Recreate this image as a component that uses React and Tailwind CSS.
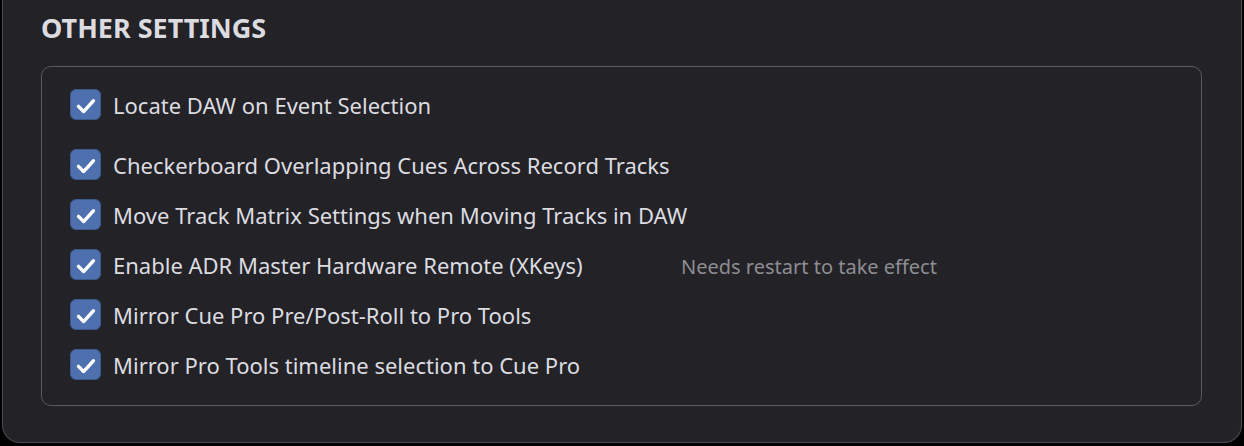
const font = { fontFamily: '"Noto Sans", "Open Sans", sans-serif' };

const settings = [
  { label: "Checkerboard Overlapping Cues Across Record Tracks" },
  { label: "Move Track Matrix Settings when Moving Tracks in DAW" },
  { label: "Enable ADR Master Hardware Remote (XKeys)", note: "Needs restart to take effect" },
  { label: "Mirror Cue Pro Pre/Post-Roll to Pro Tools" },
  { label: "Mirror Pro Tools timeline selection to Cue Pro" },
];

const CheckBox = () => (
  <span className="flex h-[31px] w-[31px] shrink-0 items-center justify-center rounded-[6px] border border-[#3d5a8f] bg-[#4e70ae]">
    <svg width="31" height="31" viewBox="0 0 31 31" fill="none">
      <path
        d="M8 17.5 L13.5 23 L24 11.5"
        stroke="white"
        strokeWidth="3.6"
        strokeLinecap="round"
        strokeLinejoin="round"
      />
    </svg>
  </span>
);

const SettingRow = ({ label, note }) => (
  <label className="flex h-[50px] items-center gap-[12px]">
    <CheckBox />
    <span className="w-[556px] shrink-0 whitespace-nowrap pt-[2px] text-[22px] text-[#dcdce0]">{label}</span>
    {note && <span className="whitespace-nowrap pt-[5px] text-[20px] text-[#8d8d92]">{note}</span>}
  </label>
);

export default function App() {
  return (
    <div className="h-[446px] w-[1244px] bg-black" style={font}>
      <div className="ml-[2px] h-[443px] w-[1240px] rounded-b-[18px] border-x border-b border-[#4b4b50] bg-[#232227]">
        <h2 className="pl-[38px] pt-[14px] text-[27px] font-bold leading-none text-[#dcdce0]">
          OTHER SETTINGS
        </h2>
        <div className="ml-[38px] mt-[25px] h-[340px] w-[1161px] rounded-[10px] border border-[#5a5a60] pl-[28px] pt-[12px] pb-[16px]">
          <SettingRow label="Locate DAW on Event Selection" />
          <div className="mt-[10px]">
            {settings.map((s) => (
              <SettingRow key={s.label} label={s.label} note={s.note} />
            ))}
          </div>
        </div>
      </div>
    </div>
  );
}
